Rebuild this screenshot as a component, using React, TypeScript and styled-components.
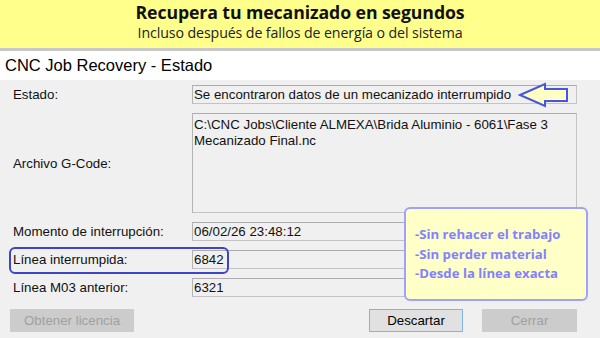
import React from 'react'
import styled, { createGlobalStyle } from 'styled-components'

const GlobalStyle = createGlobalStyle`
  body {
    margin: 0;
    background: #f0f0f0;
    font-family: 'Liberation Sans', Arial, sans-serif;
  }
`

const Page = styled.div`
  width: 600px;
  height: 338px;
  overflow: hidden;
  background: #f0f0f0;
`

const Banner = styled.header`
  height: 51px;
  box-sizing: border-box;
  padding-top: 2px;
  background: #ffff8c;
  border-bottom: 3px solid #c8c8c8;
  display: flex;
  flex-direction: column;
  align-items: center;
  font-family: 'Open Sans', sans-serif;
  color: #111;
`

const Headline = styled.h1`
  margin: 0;
  font-size: 17.7px;
  line-height: 21px;
  font-weight: 700;
  letter-spacing: -0.1px;
`

const Subline = styled.p`
  margin: 0;
  font-size: 14.2px;
  line-height: 20px;
  letter-spacing: -0.1px;
  color: #222;
`

const TitleBar = styled.div`
  height: 29px;
  background: #fff;
  display: flex;
  align-items: center;
  padding-left: 5px;
  font-size: 16.5px;
  color: #000;
`

const FormArea = styled.section`
  position: relative;
  padding: 5px 23px 0 13px;
`

const Grid = styled.div`
  display: grid;
  grid-template-columns: 179px 1fr;
  grid-template-rows: 19px 100px 19px 19px 19px;
  row-gap: 9px;
  align-items: center;
  font-size: 13.3px;
  color: #111;
`

const Label = styled.div``

const Field = styled.div<{ $tall?: boolean }>`
  height: 100%;
  box-sizing: border-box;
  border: 1px solid #c3c3c3;
  border-top-color: #acacac;
  border-left-color: #b4b4b4;
  background: #f0f0f0;
  padding: ${(p) => (p.$tall ? '3px 1px' : '0 1px')};
  display: flex;
  align-items: ${(p) => (p.$tall ? 'flex-start' : 'center')};
  line-height: 16px;
  white-space: pre-line;
`

const Highlight = styled.div`
  position: absolute;
  left: 9px;
  top: 167px;
  width: 220px;
  height: 27px;
  box-sizing: border-box;
  border: 2px solid #3d45c6;
  border-radius: 6px;
`

const Callout = styled.aside`
  position: absolute;
  left: 404px;
  top: 127px;
  width: 184px;
  height: 94px;
  box-sizing: border-box;
  background: #ffffc8;
  border: 2px solid #a0a0ff;
  border-radius: 6px;
  padding: 16px 0 0 9px;
  font-family: 'Open Sans', sans-serif;
  font-weight: 700;
  font-size: 13.2px;
  line-height: 19.5px;
  color: #8282ff;
`

const ArrowMark = styled.svg`
  position: absolute;
  left: 518px;
  top: 2px;
`

const ButtonRow = styled.div`
  display: flex;
  align-items: center;
  padding: 12px 23px 0 10px;
  gap: 19px;
`

const Button = styled.button<{ $disabled?: boolean; $focused?: boolean; $width: number }>`
  width: ${(p) => p.$width}px;
  height: 23px;
  box-sizing: border-box;
  font-family: 'Liberation Sans', Arial, sans-serif;
  font-size: 13.3px;
  padding: 0;
  border: 1px solid ${(p) => (p.$disabled ? '#cccccc' : p.$focused ? '#7eb4ea' : '#adadad')};
  background: ${(p) => (p.$disabled ? '#cccccc' : '#e1e1e1')};
  color: ${(p) => (p.$disabled ? '#a0a0a0' : '#000')};
  &:first-child {
    margin-right: auto;
  }
`

const rows = [
  { label: 'Estado:', value: 'Se encontraron datos de un mecanizado interrumpido' },
  {
    label: 'Archivo G-Code:',
    value: 'C:\\CNC Jobs\\Cliente ALMEXA\\Brida Aluminio - 6061\\Fase 3\nMecanizado Final.nc',
    tall: true,
  },
  { label: 'Momento de interrupción:', value: '06/02/26 23:48:12' },
  { label: 'Línea interrumpida:', value: '6842' },
  { label: 'Línea M03 anterior:', value: '6321' },
]

export default function App() {
  return (
    <Page>
      <GlobalStyle />
      <Banner>
        <Headline>Recupera tu mecanizado en segundos</Headline>
        <Subline>Incluso después de fallos de energía o del sistema</Subline>
      </Banner>
      <TitleBar>CNC Job Recovery - Estado</TitleBar>
      <FormArea>
        <Grid>
          {rows.map((r) => (
            <React.Fragment key={r.label}>
              <Label>{r.label}</Label>
              <Field $tall={r.tall}>{r.value}</Field>
            </React.Fragment>
          ))}
        </Grid>
        <ArrowMark width="52" height="26" viewBox="0 0 52 26">
          <path
            d="M2 13 L27 2 L27 7 L49 7 L49 19 L27 19 L27 24 Z"
            fill="#ffffc4"
            stroke="#4a55dd"
            strokeWidth="2"
            strokeLinejoin="miter"
          />
        </ArrowMark>
        <Highlight />
        <Callout>
          <div>-Sin rehacer el trabajo</div>
          <div>-Sin perder material</div>
          <div>-Desde la línea exacta</div>
        </Callout>
      </FormArea>
      <ButtonRow>
        <Button $disabled $width={124}>Obtener licencia</Button>
        <Button $focused $width={94}>Descartar</Button>
        <Button $disabled $width={95}>Cerrar</Button>
      </ButtonRow>
    </Page>
  )
}
